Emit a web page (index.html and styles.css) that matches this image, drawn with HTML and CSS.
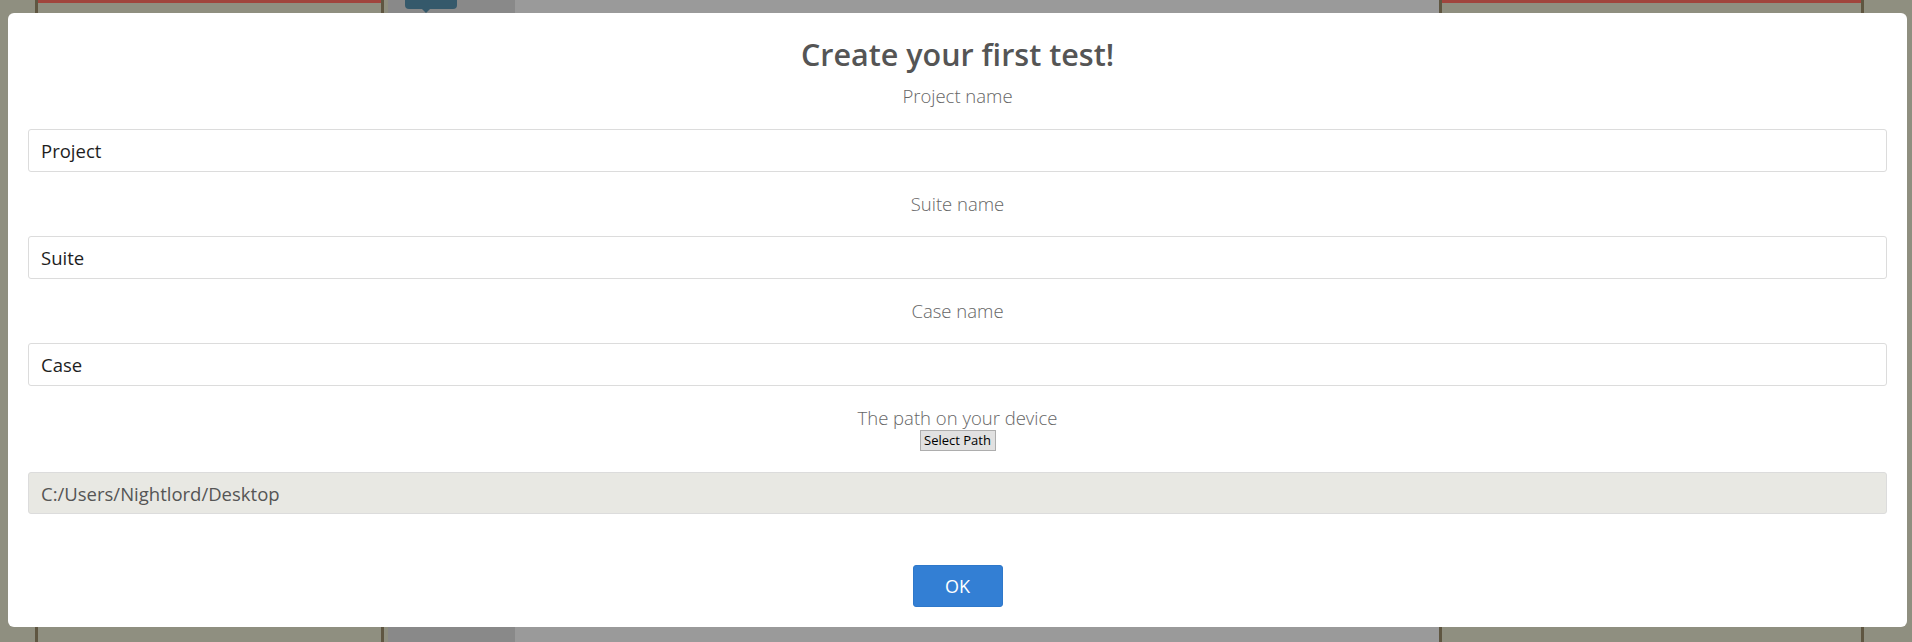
FILE: index.html
```html
<!DOCTYPE html>
<html lang="en">
<head>
<meta charset="utf-8">
<title>Create your first test!</title>
<link rel="stylesheet" href="styles.css">
</head>
<body>
<div class="backdrop">
  <div class="seg olive w35"></div>
  <div class="seg line"></div>
  <div class="seg panel w343"></div>
  <div class="seg line"></div>
  <div class="seg olive w4"></div>
  <div class="seg gray-dark w127"></div>
  <div class="seg gray-light w924"></div>
  <div class="seg line"></div>
  <div class="seg panel w419"></div>
  <div class="seg line"></div>
  <div class="seg olive grow"></div>
  <div class="tip"></div>
</div>

<div class="modal">
  <h2 class="title">Create your first test!</h2>
  <div class="field-label first">Project name</div>
  <input class="text-input" type="text" value="Project">
  <div class="field-label">Suite name</div>
  <input class="text-input" type="text" value="Suite">
  <div class="field-label">Case name</div>
  <input class="text-input" type="text" value="Case">
  <div class="field-label path-label">The path on your device</div>
  <div class="select-row"><button class="btn-select" type="button">Select Path</button></div>
  <input class="text-input path-input" type="text" value="C:/Users/Nightlord/Desktop" readonly>
  <div class="ok-row"><button class="btn-ok" type="button">OK</button></div>
</div>
</body>
</html>
```

FILE: styles.css
```css
html, body {
  margin: 0;
  padding: 0;
  height: 642px;
  overflow: hidden;
  font-family: "Open Sans", "Noto Sans", "Liberation Sans", sans-serif;
}

.backdrop {
  position: relative;
  display: flex;
  height: 642px;
  width: 1912px;
}

.seg { height: 100%; flex: none; }
.olive { background: #8f8f80; }
.line { width: 3px; background: #5f5641; }
.panel { background: #8f8f80; border-top: 3px solid #a0453d; box-sizing: border-box; }
.gray-dark { background: #898989; }
.gray-light { background: #9a9a9a; }
.w35 { width: 35px; }
.w343 { width: 343px; }
.w4 { width: 4px; }
.w127 { width: 127px; }
.w924 { width: 924px; }
.w419 { width: 419px; }
.grow { flex: 1; }

.tip {
  position: absolute;
  left: 405px;
  top: -6px;
  width: 52px;
  height: 15px;
  background: #35596b;
  border-radius: 4px;
}
.tip::after {
  content: "";
  position: absolute;
  left: 17px;
  bottom: -4px;
  border-left: 4px solid transparent;
  border-right: 4px solid transparent;
  border-top: 4px solid #35596b;
}

.modal {
  position: absolute;
  left: 8px;
  top: 13px;
  width: 1899px;
  box-sizing: border-box;
  background: #ffffff;
  border-radius: 6px;
  padding: 21px 20px 20px;
  display: flex;
  flex-direction: column;
}

.title {
  margin: 0;
  height: 40px;
  line-height: 40px;
  font-size: 30.5px;
  font-weight: 600;
  color: #555555;
  text-align: center;
}

.field-label {
  height: 24px;
  line-height: 24px;
  margin: 20px 0;
  font-size: 18.5px;
  font-weight: 300;
  color: #666666;
  text-align: center;
}
.field-label.first { margin: 10px 0 21px; }
.field-label.path-label { margin: 20px 0 0; }

.text-input {
  display: block;
  box-sizing: border-box;
  width: 100%;
  height: 43px;
  margin: 0;
  padding: 0 12px;
  border: 1px solid #dcdcdc;
  border-radius: 3px;
  background: #ffffff;
  font-family: "Open Sans", "Noto Sans", "Liberation Sans", sans-serif;
  font-size: 18.5px;
  color: #1e1e1e;
  outline: none;
}

.path-input {
  margin-top: 21px;
  height: 42px;
  background: #e8e8e3;
  color: #555555;
}

.select-row {
  display: flex;
  justify-content: center;
}

.btn-select {
  height: 21px;
  width: 76px;
  margin: 0;
  padding: 0;
  box-sizing: border-box;
  border: 1px solid #adadad;
  border-radius: 0;
  background: #e1e1e1;
  font-family: "Open Sans", "Noto Sans", "Liberation Sans", sans-serif;
  font-size: 13px;
  line-height: 19px;
  color: #000000;
}

.ok-row {
  display: flex;
  justify-content: center;
  margin-top: 51px;
}

.btn-ok {
  width: 90px;
  height: 42px;
  margin: 0;
  padding: 0;
  border: 1px solid #2e78ca;
  border-radius: 3px;
  background: #337fd4;
  color: #ffffff;
  font-family: "Open Sans", "Noto Sans", "Liberation Sans", sans-serif;
  font-size: 18px;
}
```
